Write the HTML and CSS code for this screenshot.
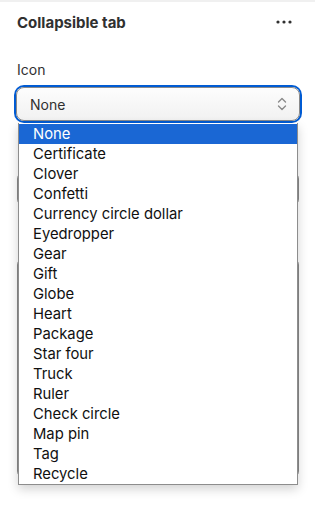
FILE: index.html
```html
<!DOCTYPE html>
<html lang="en">
<head>
  <meta charset="UTF-8">
  <meta name="viewport" content="width=device-width, initial-scale=1.0">
  <title>Collapsible tab</title>
  <link rel="stylesheet" href="styles.css">
</head>
<body>
  <div class="panel">
    <div class="panel-head">
      <h2>Collapsible tab</h2>
      <button class="more" aria-label="More">
        <svg width="16" height="4" viewBox="0 0 16 4"><circle cx="2" cy="2" r="1.6"/><circle cx="8" cy="2" r="1.6"/><circle cx="14" cy="2" r="1.6"/></svg>
      </button>
    </div>

    <div class="field field-icon">
      <label>Icon</label>
      <div class="select">
        <span>None</span>
        <svg class="chev" width="10" height="16" viewBox="0 0 10 16"><path d="M1.5 6 L5 2.5 L8.5 6 M1.5 10 L5 13.5 L8.5 10" fill="none" stroke="#8a8a8a" stroke-width="1.4" stroke-linecap="round" stroke-linejoin="round"/></svg>
      </div>

      <!-- open option list, drawn over the rest of the form -->
      <ul class="options">
        <li class="selected">None</li>
        <li>Certificate</li>
        <li>Clover</li>
        <li>Confetti</li>
        <li>Currency circle dollar</li>
        <li>Eyedropper</li>
        <li>Gear</li>
        <li>Gift</li>
        <li>Globe</li>
        <li>Heart</li>
        <li>Package</li>
        <li>Star four</li>
        <li>Truck</li>
        <li>Ruler</li>
        <li>Check circle</li>
        <li>Map pin</li>
        <li>Tag</li>
        <li>Recycle</li>
      </ul>
    </div>

    <!-- fields hidden under the open list -->
    <div class="field field-hidden">
      <div class="text"></div>
    </div>

    <div class="field field-hidden">
      <div class="textarea"></div>
    </div>
  </div>
</body>
</html>
```

FILE: styles.css
```css
body {
  margin: 0;
  font-family: Inter, "Noto Sans", sans-serif;
  color: #303030;
  background: #fff;
  border-top: 2px solid #f0f0f0;
  overflow: hidden;
  height: 506px;
}
.panel {
  padding: 8px 16px 0 17px;
}
.panel-head {
  display: flex;
  justify-content: space-between;
  align-items: center;
  height: 24px;
}
.panel-head h2 {
  margin: 0;
  font-size: 15px;
  font-weight: 650;
  letter-spacing: 0;
}
.more {
  border: none;
  background: none;
  padding: 0;
  margin-right: 7px;
  display: flex;
  fill: #303030;
}
.field {
  display: flex;
  flex-direction: column;
}
.field label {
  font-size: 14px;
  line-height: 16px;
  margin-bottom: 9px;
}
.field-icon {
  position: relative;
  margin-top: 28px;
}
.field-hidden {
  margin-top: 50px;
}
.select {
  display: flex;
  justify-content: space-between;
  align-items: center;
  height: 32px;
  margin-left: -1px;
  margin-right: -1px;
  padding: 0 12px 0 13px;
  border: 1px solid #8a8a8a;
  border-radius: 8px;
  background: linear-gradient(#fdfdfd, #f1f1f1);
  box-shadow: 0 0 0 2px #005bd3;
  font-size: 14px;
}
.options {
  position: absolute;
  top: 61px;
  left: 1px;
  right: 1px;
  margin: 0;
  padding: 1px 0 0;
  list-style: none;
  background: #fff;
  border: 1px solid #8d8d8d;
  border-top: none;
  box-shadow: 0 4px 10px rgba(0, 0, 0, 0.18);
  z-index: 2;
}
.options li {
  height: 20px;
  line-height: 20px;
  padding-left: 14px;
  font-size: 14.8px;
  color: #101010;
}
.options li.selected {
  background: #1a67d4;
  color: #fff;
}
.text {
  height: 34px;
  border: 1px solid #8a8a8a;
  border-radius: 8px;
}
.textarea {
  height: 220px;
  border: 1px solid #8a8a8a;
  border-radius: 8px;
}
```
